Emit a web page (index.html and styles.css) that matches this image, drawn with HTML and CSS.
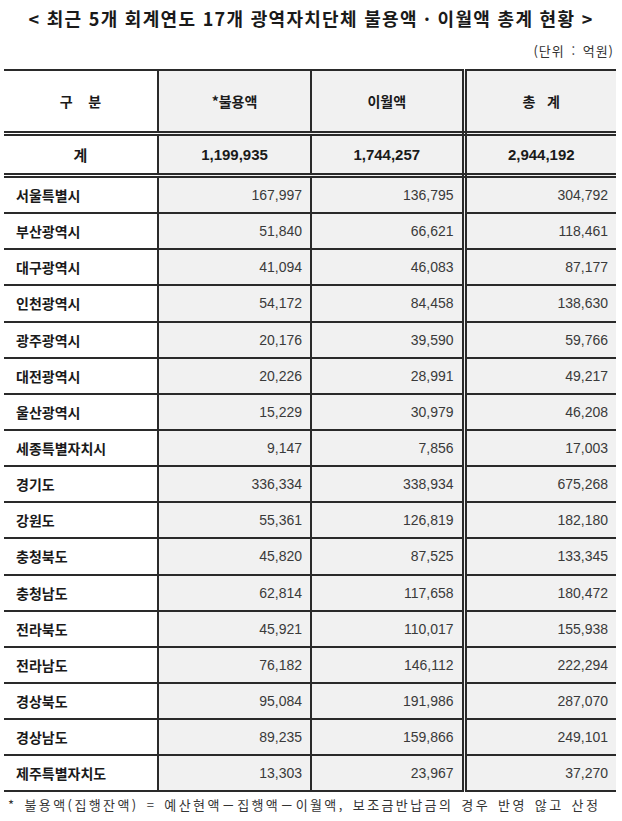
FILE: index.html
```html
<!DOCTYPE html>
<html lang="ko">
<head>
<meta charset="utf-8">
<link rel="stylesheet" href="styles.css">
</head>
<body>
<div class="page">
  <h1 class="title">&lt; 최근 5개 회계연도 17개 광역자치단체 불용액 · 이월액 총계 현황 &gt;</h1>
  <div class="unit">(단위 : 억원)</div>
  <table class="tbl">
    <colgroup>
      <col class="c1"><col class="c2"><col class="c3"><col class="c4">
    </colgroup>
    <thead>
      <tr class="hdr">
        <th class="name-h">구&nbsp;&nbsp;&nbsp;&nbsp;분</th>
        <th>*불용액</th>
        <th class="dbl">이월액</th>
        <th>총&nbsp;&nbsp;&nbsp;계</th>
      </tr>
    </thead>
    <tbody>
      <tr class="sum">
        <td class="name-h">계</td>
        <td>1,199,935</td>
        <td class="dbl">1,744,257</td>
        <td>2,944,192</td>
      </tr>
      <tr><td class="name">서울특별시</td><td>167,997</td><td class="dbl">136,795</td><td>304,792</td></tr>
      <tr><td class="name">부산광역시</td><td>51,840</td><td class="dbl">66,621</td><td>118,461</td></tr>
      <tr><td class="name">대구광역시</td><td>41,094</td><td class="dbl">46,083</td><td>87,177</td></tr>
      <tr><td class="name">인천광역시</td><td>54,172</td><td class="dbl">84,458</td><td>138,630</td></tr>
      <tr><td class="name">광주광역시</td><td>20,176</td><td class="dbl">39,590</td><td>59,766</td></tr>
      <tr><td class="name">대전광역시</td><td>20,226</td><td class="dbl">28,991</td><td>49,217</td></tr>
      <tr><td class="name">울산광역시</td><td>15,229</td><td class="dbl">30,979</td><td>46,208</td></tr>
      <tr><td class="name">세종특별자치시</td><td>9,147</td><td class="dbl">7,856</td><td>17,003</td></tr>
      <tr><td class="name">경기도</td><td>336,334</td><td class="dbl">338,934</td><td>675,268</td></tr>
      <tr><td class="name">강원도</td><td>55,361</td><td class="dbl">126,819</td><td>182,180</td></tr>
      <tr><td class="name">충청북도</td><td>45,820</td><td class="dbl">87,525</td><td>133,345</td></tr>
      <tr><td class="name">충청남도</td><td>62,814</td><td class="dbl">117,658</td><td>180,472</td></tr>
      <tr><td class="name">전라북도</td><td>45,921</td><td class="dbl">110,017</td><td>155,938</td></tr>
      <tr><td class="name">전라남도</td><td>76,182</td><td class="dbl">146,112</td><td>222,294</td></tr>
      <tr><td class="name">경상북도</td><td>95,084</td><td class="dbl">191,986</td><td>287,070</td></tr>
      <tr><td class="name">경상남도</td><td>89,235</td><td class="dbl">159,866</td><td>249,101</td></tr>
      <tr><td class="name">제주특별자치도</td><td>13,303</td><td class="dbl">23,967</td><td>37,270</td></tr>
    </tbody>
  </table>
  <p class="note">* 불용액(집행잔액) = 예산현액－집행액－이월액, 보조금반납금의 경우 반영 않고 산정</p>
</div>
</body>
</html>
```

FILE: styles.css
```css
html, body {
  margin: 0;
  padding: 0;
  background: #ffffff;
}
body {
  font-family: "Liberation Sans", "Noto Sans CJK KR", sans-serif;
  color: #222;
}
.page {
  width: 622px;
  padding-top: 5px;
}
.title {
  margin: 0;
  height: 26px;
  line-height: 26px;
  text-align: center;
  font-family: "Noto Sans CJK KR", sans-serif;
  font-size: 18px;
  font-weight: 700;
  letter-spacing: 1.3px;
  color: #1a1a1a;
}
.unit {
  margin-top: 10px;
  height: 20px;
  line-height: 20px;
  text-align: right;
  padding-right: 8px;
  font-family: "Noto Sans CJK KR", sans-serif;
  font-size: 13px;
  letter-spacing: 1px;
  word-spacing: 2px;
  color: #333;
}
.tbl {
  margin-top: 8px;
  margin-left: 4px;
  width: 612px;
  table-layout: fixed;
  border-collapse: collapse;
  border-top: 2px solid #2a2a2a;
}
.c1 { width: 154px; }
.c2 { width: 153px; }
.c3 { width: 153px; }
.c4 { width: 152px; }
.tbl th, .tbl td {
  background: #f1f1f1;
  border-left: 2px solid #2a2a2a;
  border-bottom: 2px solid #2a2a2a;
  padding: 0 8px 0 0;
  text-align: right;
  font-size: 14px;
  color: #3a3a3a;
  height: 34.15px;
}
.tbl th:first-child, .tbl td:first-child {
  border-left: none;
  background: #ffffff;
}
.tbl .dbl {
  border-right: 5px double #2a2a2a;
}
.tbl thead th {
  height: 60px;
  text-align: center;
  padding: 0;
  font-family: "Noto Sans CJK KR", sans-serif;
  font-weight: 700;
  font-size: 14px;
  color: #1a1a1a;
  border-bottom: 5px double #2a2a2a;
}
.tbl .sum td {
  height: 37px;
  text-align: center;
  padding: 0;
  font-weight: 700;
  font-size: 15px;
  color: #1a1a1a;
  border-bottom: 5px double #2a2a2a;
}
.tbl .sum td.name-h {
  font-family: "Noto Sans CJK KR", sans-serif;
}
.tbl td.name {
  text-align: left;
  padding-left: 12px;
  font-family: "Noto Sans CJK KR", sans-serif;
  font-weight: 700;
  font-size: 14px;
  color: #1a1a1a;
}
.note {
  margin: 3px 0 0 8px;
  font-family: "Noto Sans CJK KR", sans-serif;
  font-size: 13px;
  letter-spacing: 2.4px;
  word-spacing: 2px;
  color: #333;
  white-space: nowrap;
}
```
